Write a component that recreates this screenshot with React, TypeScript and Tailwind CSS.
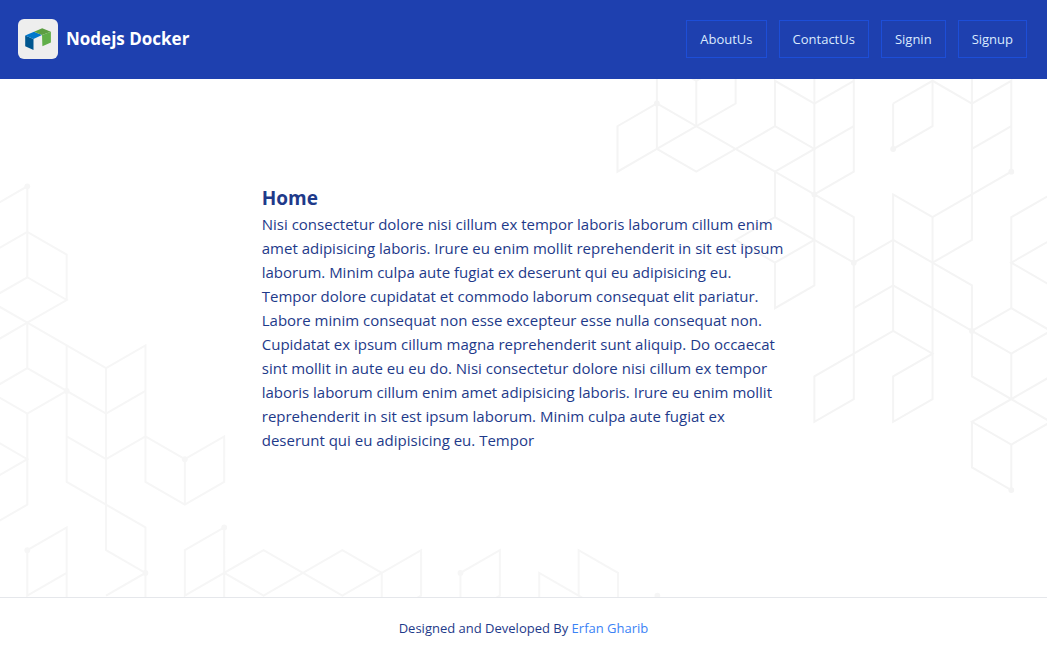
type Node = [number, number];

interface Lattice {
  originX: number;
  originY: number;
  lines: Node[][];
  dots: Node[];
}

const STEP_X = 39.38;
const STEP_Y = 22.74;

const lowerLeft: Lattice = {
  originX: 27.3,
  originY: 107.3,
  lines: [
    [[-1, 1], [0, 0], [0, 4], [1, 5], [0, 6], [-1, 7]],
    [[-1, 3], [0, 2], [1, 3], [1, 5]],
    [[0, 4], [-1, 5], [0, 6], [2, 8], [3, 7], [3, 13], [4, 14], [5, 13], [5, 11], [4, 12], [3, 11], [2, 12], [1, 11]],
    [[0, 6], [0, 8], [1, 9], [2, 10], [3, 9]],
    [[0, 8], [-1, 9], [0, 10], [1, 9]],
    [[0, 10], [0, 14], [-1, 15]],
    [[1, 7], [1, 13], [3, 15], [3, 19]],
    [[2, 8], [2, 16], [3, 17], [2, 18]],
    [[-1, 11], [0, 12], [-1, 13]],
    [[4, 12], [4, 14]],
    [[1, 19], [1, 15], [0, 16], [0, 18], [1, 17]],
    [[5, 19], [5, 15], [4, 16], [4, 18], [6, 16], [8, 18], [10, 16], [10, 18], [9, 19]],
    [[5, 17], [6, 18], [8, 16], [9, 17], [9, 19]],
    [[11, 19], [11, 17], [12, 16], [12, 18], [11, 19]],
    [[13, 19], [13, 17], [15, 19]],
    [[14, 18], [14, 16], [15, 17], [15, 19]],
  ],
  dots: [[0, 0], [1, 9], [4, 12], [0, 16], [3, 17], [5, 15], [11, 17], [16, 18]],
};

const upperRight: Lattice = {
  originX: 617.5,
  originY: 24.5,
  lines: [
    [[1, -2], [1, 2], [2, 3], [4, 1], [5, 2], [4, 3]],
    [[1, 2], [3, 0], [3, -2], [2, -1], [1, -2]],
    [[2, -1], [2, 1]],
    [[1, 2], [0, 3], [0, 1], [1, 0], [6, 5], [6, 13], [5, 14], [5, 12], [7, 10], [8, 11], [7, 12], [7, 14], [8, 13], [8, 5]],
    [[4, 1], [4, -1], [5, 0], [6, -1]],
    [[5, 2], [6, 1]],
    [[5, -2], [5, 8], [4, 9], [4, 7], [5, 6]],
    [[6, -2], [6, 3], [5, 4]],
    [[4, 3], [4, 5], [6, 7], [7, 6], [9, 8], [9, 12], [11, 14], [10, 15], [9, 14], [11, 12]],
    [[4, 5], [3, 6], [4, 7]],
    [[7, 0], [8, -1], [9, 0], [10, -1], [10, 3], [8, 5], [7, 4], [7, 10]],
    [[7, 0], [7, 2], [8, 1], [8, -1]],
    [[9, -2], [9, 6], [8, 7]],
    [[9, 2], [10, 1]],
    [[6, 9], [7, 8], [9, 10], [10, 9], [11, 10], [10, 11], [9, 10]],
    [[11, 4], [10, 5], [10, 9]],
    [[11, 6], [10, 7], [11, 8]],
    [[10, 11], [10, 13]],
    [[9, 14], [9, 16], [10, 17], [10, 15]],
  ],
  dots: [[1, 0], [5, 4], [6, 7], [7, 2], [10, 3], [9, 10], [10, 17]],
};

function LatticeDrawing({ lattice }: { lattice: Lattice }) {
  const px = (n: Node) => lattice.originX + n[0] * STEP_X;
  const py = (n: Node) => lattice.originY + n[1] * STEP_Y;
  return (
    <g>
      {lattice.lines.map((line, i) => (
        <polyline
          key={i}
          points={line.map((n) => `${px(n)},${py(n)}`).join(" ")}
          fill="none"
          stroke="currentColor"
          strokeWidth="2"
        />
      ))}
      {lattice.dots.map((n, i) => (
        <circle key={i} cx={px(n)} cy={py(n)} r="2.9" fill="currentColor" />
      ))}
    </g>
  );
}

function Backdrop() {
  return (
    <svg
      aria-hidden="true"
      viewBox="0 0 1047 518"
      preserveAspectRatio="xMidYMid slice"
      className="absolute inset-0 h-full w-full"
    >
      <g className="text-[#f6f6f6]">
        <LatticeDrawing lattice={lowerLeft} />
      </g>
      <g className="text-[#f4f4f4]">
        <LatticeDrawing lattice={upperRight} />
      </g>
    </svg>
  );
}

function Logo() {
  return (
    <svg viewBox="0 0 40 40" className="size-10 rounded-md bg-[#eeeeee]" aria-hidden="true">
      <path d="M7.2 16.6 15.5 20v11L7.2 27.2Z" fill="#00568f" />
      <path d="m7.2 16.6 8.8-3.8 8 3.2-8.5 4Z" fill="#0078cc" />
      <path d="m16 12.8 8.2-3.6 8.7 3.5-8.9 3.3Z" fill="#5c9e42" />
      <path d="m24 16 8.9-3.3v10.8l-8.5 3.7Z" fill="#60ae48" />
    </svg>
  );
}

const navItems = ["AboutUs", "ContactUs", "Signin", "Signup"];

const paragraph = [
  "Nisi consectetur dolore nisi cillum ex tempor laboris laborum cillum enim",
  "amet adipisicing laboris. Irure eu enim mollit reprehenderit in sit est ipsum",
  "laborum. Minim culpa aute fugiat ex deserunt qui eu adipisicing eu.",
  "Tempor dolore cupidatat et commodo laborum consequat elit pariatur.",
  "Labore minim consequat non esse excepteur esse nulla consequat non.",
  "Cupidatat ex ipsum cillum magna reprehenderit sunt aliquip. Do occaecat",
  "sint mollit in aute eu eu do. Nisi consectetur dolore nisi cillum ex tempor",
  "laboris laborum cillum enim amet adipisicing laboris. Irure eu enim mollit",
  "reprehenderit in sit est ipsum laborum. Minim culpa aute fugiat ex",
  "deserunt qui eu adipisicing eu. Tempor",
];

export default function App() {
  return (
    <div className="flex min-h-screen flex-col bg-white font-['Open_Sans','Noto_Sans',sans-serif] text-[#1e3a8a]">
      <header className="flex items-center justify-between bg-[#1e40af] pt-[19px] pr-5 pb-5 pl-[18px]">
        <a href="#home" className="flex items-center gap-2 text-[17px] leading-6 font-bold text-white">
          <Logo />
          Nodejs Docker
        </a>
        <nav className="flex gap-3">
          {navItems.map((item) => (
            <a
              key={item}
              href={`#${item.toLowerCase()}`}
              className="border border-[#1d4ed8] px-[13px] py-2 text-[13px] leading-5 text-[#dbeafe]"
            >
              {item}
            </a>
          ))}
        </nav>
      </header>
      <main className="relative flex grow items-center justify-center overflow-hidden pb-10">
        <Backdrop />
        <section className="relative w-1/2">
          <h1 className="text-[19px] leading-7 font-bold">Home</h1>
          <p className="text-[15px] leading-6 whitespace-pre-line">{paragraph.join("\n")}</p>
        </section>
      </main>
      <footer className="border-t border-gray-200 py-5 text-center text-[13px] leading-5">
        Designed and Developed By{" "}
        <a href="#author" className="text-[#3b82f6]">
          Erfan Gharib
        </a>
      </footer>
    </div>
  );
}
